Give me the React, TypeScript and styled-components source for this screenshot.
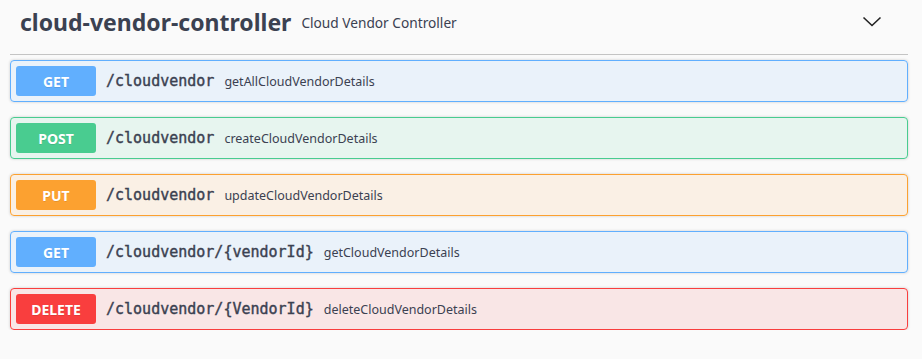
import React from "react";
import styled, { createGlobalStyle } from "styled-components";

const Global = createGlobalStyle`
  body {
    margin: 0;
    background: #fafafa;
    font-family: "Noto Sans", "Open Sans", sans-serif;
    color: #3b4151;
  }
`;

type Method = "GET" | "POST" | "PUT" | "DELETE";

const colors: Record<Method, string> = {
  GET: "97,175,254",
  POST: "73,204,144",
  PUT: "252,161,48",
  DELETE: "249,62,62",
};

const ops: { method: Method; path: string; summary: string }[] = [
  { method: "GET", path: "/cloudvendor", summary: "getAllCloudVendorDetails" },
  { method: "POST", path: "/cloudvendor", summary: "createCloudVendorDetails" },
  { method: "PUT", path: "/cloudvendor", summary: "updateCloudVendorDetails" },
  { method: "GET", path: "/cloudvendor/{vendorId}", summary: "getCloudVendorDetails" },
  { method: "DELETE", path: "/cloudvendor/{VendorId}", summary: "deleteCloudVendorDetails" },
];

const App = () => {
  return (
    <Wrapper>
      <Global />
      <TagHeader>
        <Title>cloud-vendor-controller</Title>
        <SubTitle>Cloud Vendor Controller</SubTitle>
        <Toggle>
          <svg width="20" height="20" viewBox="0 0 20 20">
            <path d="M1.5 5.5 L10 13.5 L18.5 5.5" fill="none" stroke="#222" strokeWidth="1.6" />
          </svg>
        </Toggle>
      </TagHeader>
      <List>
        {ops.map((op, i) => (
          <OpBlock key={i} $rgb={colors[op.method]}>
            <Badge $rgb={colors[op.method]}>{op.method}</Badge>
            <Path>{op.path}</Path>
            <Summary>{op.summary}</Summary>
          </OpBlock>
        ))}
      </List>
    </Wrapper>
  );
};

const Wrapper = styled.div`
  padding: 0 14px 0 10px;
`;

const TagHeader = styled.div`
  display: flex;
  align-items: center;
  height: 55px;
  box-sizing: border-box;
  padding: 0 0 11px 10px;
  border-bottom: 1px solid #c4c4c4;
`;

const Title = styled.span`
  font-size: 23px;
  font-weight: 700;
  color: #3b4151;
`;

const SubTitle = styled.span`
  font-size: 13.7px;
  margin-left: 10px;
  margin-top: 2px;
  color: #3b4151;
`;

const Toggle = styled.span`
  margin-left: auto;
  margin-right: 26px;
  display: flex;
`;

const List = styled.div`
  display: flex;
  flex-direction: column;
  gap: 15px;
  margin-top: 5px;
`;

const OpBlock = styled.div<{ $rgb: string }>`
  display: flex;
  align-items: center;
  padding: 5px;
  border: 1px solid rgb(${(p) => p.$rgb});
  background: rgba(${(p) => p.$rgb}, 0.1);
  border-radius: 4px;
  box-shadow: 0 0 3px rgba(0, 0, 0, 0.19);
`;

const Badge = styled.span<{ $rgb: string }>`
  width: 80px;
  height: 30px;
  display: flex;
  align-items: center;
  justify-content: center;
  background: rgb(${(p) => p.$rgb});
  color: #fff;
  font-size: 14px;
  font-weight: 700;
  border-radius: 3px;
  text-shadow: 0 1px 0 rgba(0, 0, 0, 0.1);
`;

const Path = styled.span`
  font-family: "DejaVu Sans Mono", monospace;
  font-size: 15px;
  font-weight: 400;
  -webkit-text-stroke: 0.4px #3b4151;
  padding: 0 10px;
  color: #3b4151;
`;

const Summary = styled.span`
  font-size: 12.5px;
  color: #3b4151;
`;

export default App;
